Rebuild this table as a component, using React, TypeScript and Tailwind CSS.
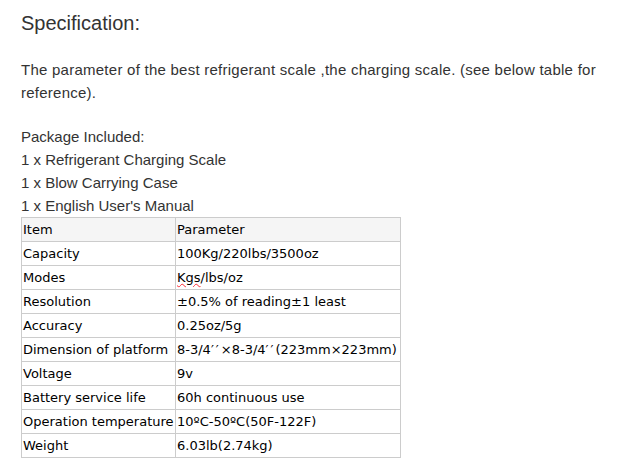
const rows: [string, React.ReactNode][] = [
  ["Capacity", "100Kg/220lbs/3500oz"],
  [
    "Modes",
    <>
      <span className="underline decoration-wavy decoration-red-500 decoration-1">Kgs</span>/lbs/oz
    </>,
  ],
  ["Resolution", "±0.5% of reading±1 least"],
  ["Accuracy", "0.25oz/5g"],
  [
    "Dimension of platform",
    <>
      8-3/4<span className="tracking-[2px]">′′</span>×8-3/4<span className="tracking-[2px]">′′</span>(223mm×223mm)
    </>,
  ],
  ["Voltage", "9v"],
  ["Battery service life", "60h continuous use"],
  ["Operation temperature", "10ºC-50ºC(50F-122F)"],
  ["Weight", "6.03lb(2.74kg)"],
];

export default function App() {
  return (
    <div className="h-[470px] w-[635px] bg-white pl-[21px] pt-[8px] text-[#333] font-['Liberation_Sans',Arial,sans-serif]">
      <h1 className="text-[20px] leading-[30px]">Specification:</h1>

      <p className="mt-[20px] w-[590px] text-[15px] leading-[23px] tracking-[0.25px]">
        The parameter of the best refrigerant scale ,the charging scale. (see below table for reference).
      </p>

      <div className="mt-[21px] text-[15px] leading-[23px]">
        <p>Package Included:</p>
        <p>1 x Refrigerant Charging Scale</p>
        <p>1 x Blow Carrying Case</p>
        <p>1 x English User's Manual</p>
      </div>

      <table className="border-collapse text-[13px] text-black font-['DejaVu_Sans',Verdana,sans-serif]">
        <tbody>
          <tr className="bg-[#f5f5f5]">
            <td className="h-[24px] w-[154px] border border-[#ccc] p-0 pl-[1px]">Item</td>
            <td className="h-[24px] w-[225px] border border-[#ccc] p-0 pl-[1px]">Parameter</td>
          </tr>
          {rows.map(([k, v]) => (
            <tr key={k}>
              <td className="h-[24px] border border-[#ccc] p-0 pl-[1px] whitespace-nowrap">{k}</td>
              <td className="h-[24px] border border-[#ccc] p-0 pl-[1px] whitespace-nowrap">{v}</td>
            </tr>
          ))}
        </tbody>
      </table>
    </div>
  );
}
